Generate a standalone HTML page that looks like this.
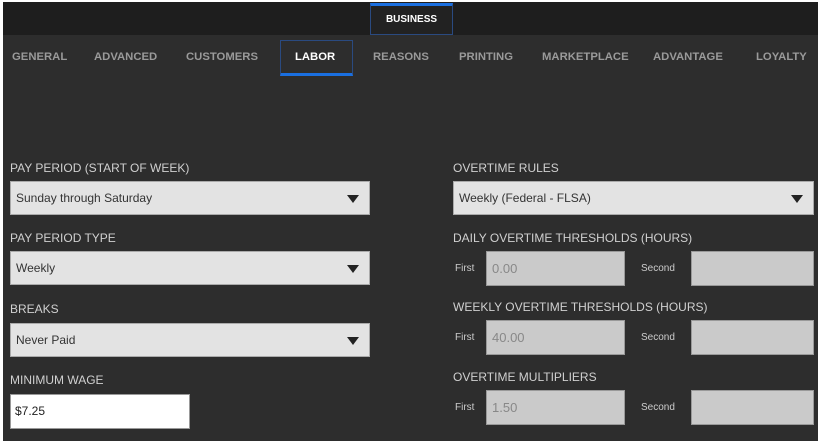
<!DOCTYPE html><html><head><style>
body{margin:0;width:824px;height:446px;background:#fff;position:relative;overflow:hidden;font-family:"Liberation Sans",sans-serif}
.w{position:absolute;left:3px;top:2px;width:815px;height:439px;background:#2d2d2d}
.top{position:absolute;left:3px;top:2px;width:815px;height:33px;background:#1e1e1e}
.a{position:absolute}
.tab{position:absolute;top:51px;font-size:11.3px;font-weight:bold;color:#9a9a9a}
.lbl{position:absolute;font-size:12px;color:#d0d0d0}
.sel{position:absolute;height:34px;background:#e3e3e3;border:1px solid #aaa;box-sizing:border-box;font-size:12px;color:#333;line-height:32px;padding-left:5px}
.sel:after{content:"";position:absolute;right:10px;top:13px;border-left:6px solid transparent;border-right:6px solid transparent;border-top:8px solid #222}
.sm{position:absolute;font-size:10px;color:#ccc}
.in{position:absolute;height:35px;background:#cacaca;border:1px solid #999;box-sizing:border-box;font-size:13px;color:#888;line-height:33px;padding-left:5px}
</style></head><body>
<div class="w"></div><div class="top"></div>
<div class="a" style="left:370px;top:3px;width:83px;height:32px;box-sizing:border-box;border:1px solid #2a4a80;border-top:3px solid #1a6fe0;background:#222;color:#fff;font-size:10px;font-weight:bold;text-align:center;line-height:28px">BUSINESS</div>
<div class="a" style="left:280px;top:40px;width:73px;height:36px;box-sizing:border-box;border:1px solid #2a4a80;border-bottom:3px solid #1a6fe0"></div>
<div class="tab" style="left:12px">GENERAL</div>
<div class="tab" style="left:94px">ADVANCED</div>
<div class="tab" style="left:186px">CUSTOMERS</div>
<div class="tab" style="left:295px;color:#fff">LABOR</div>
<div class="tab" style="left:373px">REASONS</div>
<div class="tab" style="left:459px">PRINTING</div>
<div class="tab" style="left:542px">MARKETPLACE</div>
<div class="tab" style="left:653px">ADVANTAGE</div>
<div class="tab" style="left:756px">LOYALTY</div>

<div class="lbl" style="left:10px;top:161px">PAY PERIOD (START OF WEEK)</div>
<div class="sel" style="left:10px;top:181px;width:360px">Sunday through Saturday</div>
<div class="lbl" style="left:10px;top:231px">PAY PERIOD TYPE</div>
<div class="sel" style="left:10px;top:251px;width:360px">Weekly</div>
<div class="lbl" style="left:10px;top:302px">BREAKS</div>
<div class="sel" style="left:10px;top:323px;width:360px">Never Paid</div>
<div class="lbl" style="left:10px;top:373px">MINIMUM WAGE</div>
<div class="a" style="left:10px;top:394px;width:180px;height:35px;background:#fff;border:1px solid #999;box-sizing:border-box;font-size:12px;color:#222;line-height:33px;padding-left:4px">$7.25</div>

<div class="lbl" style="left:453px;top:161px">OVERTIME RULES</div>
<div class="sel" style="left:453px;top:181px;width:361px">Weekly (Federal - FLSA)</div>
<div class="lbl" style="left:453px;top:231px">DAILY OVERTIME THRESHOLDS (HOURS)</div>
<div class="sm" style="left:455px;top:263px">First</div><div class="in" style="left:486px;top:251px;width:139px">0.00</div>
<div class="sm" style="left:641px;top:263px">Second</div><div class="in" style="left:691px;top:251px;width:123px"></div>
<div class="lbl" style="left:453px;top:300px">WEEKLY OVERTIME THRESHOLDS (HOURS)</div>
<div class="sm" style="left:455px;top:332px">First</div><div class="in" style="left:486px;top:320px;width:139px">40.00</div>
<div class="sm" style="left:641px;top:332px">Second</div><div class="in" style="left:691px;top:320px;width:123px"></div>
<div class="lbl" style="left:453px;top:370px">OVERTIME MULTIPLIERS</div>
<div class="sm" style="left:455px;top:402px">First</div><div class="in" style="left:486px;top:390px;width:139px">1.50</div>
<div class="sm" style="left:641px;top:402px">Second</div><div class="in" style="left:691px;top:390px;width:123px"></div>
</body></html>
